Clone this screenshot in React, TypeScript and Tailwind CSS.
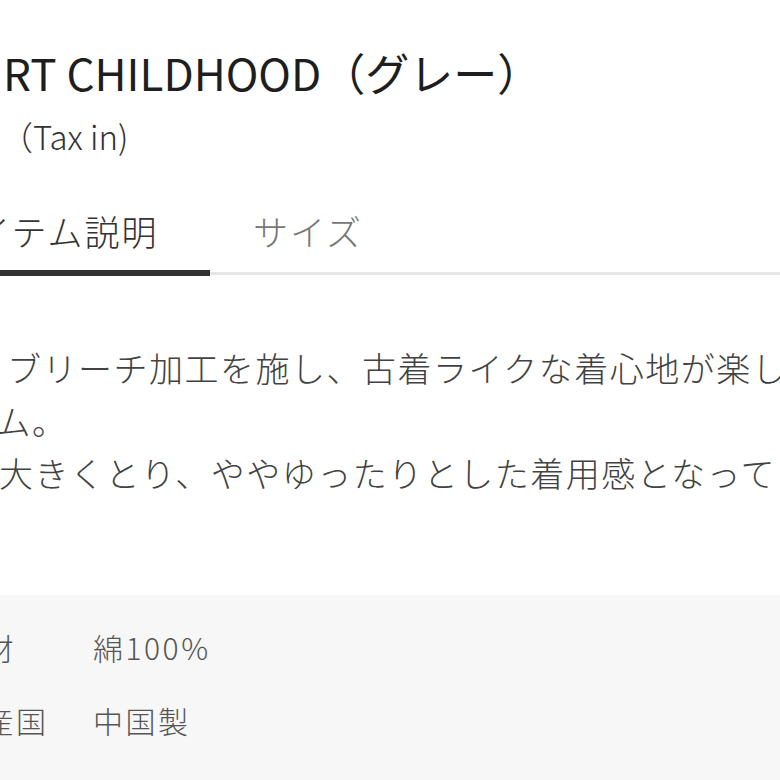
import React from "react";

const jp = { fontFamily: '"Noto Sans CJK JP", "Noto Sans", sans-serif' };

export default function App() {
  return (
    <div
      className="w-[780px] h-[780px] overflow-hidden bg-white flex flex-col"
      style={jp}
    >
      {/* Title */}
      <div className="mt-[50px] ml-[3px] h-[45px] text-[44px] leading-[45px] text-[#1e1e1e] whitespace-nowrap">
        RT CHILDHOOD（グレー）
      </div>

      {/* Price note */}
      <div className="mt-[25px] h-[32px] text-[33px] leading-[32px] font-light text-[#333] whitespace-nowrap">
        （Tax in)
      </div>

      {/* Tabs */}
      <div className="mt-[61px] flex flex-col">
        <div className="flex items-start h-[57px] whitespace-nowrap text-[35px] leading-[35px] tracking-[2px] font-light">
          <div className="w-[210px] ml-[-60px] text-[#333]">
            <span className="inline-block">アイテム説明</span>
          </div>
          <div className="ml-[103px] text-[#777]">サイズ</div>
        </div>
        <div className="flex h-[6px]">
          <div className="w-[210px] bg-[#333]" />
          <div className="flex-1 flex flex-col justify-center">
            <div className="h-[3px] bg-[#e6e6e6]" />
          </div>
        </div>
      </div>

      {/* Description */}
      <div className="mt-[66px] flex flex-col text-[34px] leading-[52.5px] tracking-[1.5px] font-light text-[#424242] whitespace-nowrap">
        <div className="ml-[7px]">ブリーチ加工を施し、古着ライクな着心地が楽しめる</div>
        <div className="ml-[-38px]">テム。</div>
        <div className="ml-[-1px]">大きくとり、ややゆったりとした着用感となっています。</div>
      </div>

      {/* Spec table */}
      <div className="mt-[95px] flex-1 bg-[#f7f7f7] pt-[37px]">
        <div className="ml-[-49px] grid grid-cols-[142px_1fr] gap-y-[43px] text-[30px] leading-[30px] tracking-[2.5px] font-light text-[#555] whitespace-nowrap">
          <div>素材</div>
          <div>綿100%</div>
          <div>原産国</div>
          <div>中国製</div>
        </div>
      </div>
    </div>
  );
}
